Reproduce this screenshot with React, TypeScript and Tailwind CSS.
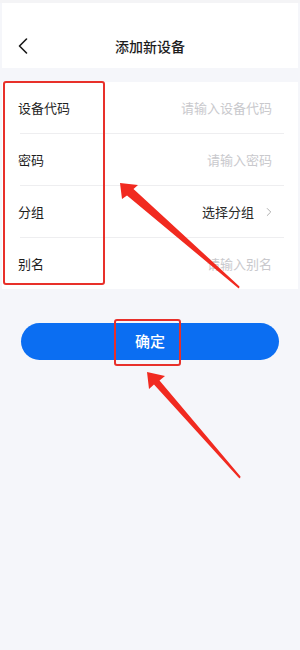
import { ChevronLeft, ChevronRight } from 'lucide-react'

const rows = [
  { label: '设备代码', hint: '请输入设备代码' },
  { label: '密码', hint: '请输入密码' },
  { label: '分组', hint: '选择分组', select: true },
  { label: '别名', hint: '请输入别名' },
]

export default function App() {
  return (
    <div
      className="relative w-[300px] h-[650px] overflow-hidden bg-[#f5f6fa]"
      style={{ fontFamily: '"Noto Sans CJK SC", "Noto Sans", sans-serif' }}
    >
      <div className="h-[3px] bg-[#f4f4f6]" />
      <header className="mx-[2px] bg-white pt-[27px] pb-[6px]">
        <div className="relative h-[32px] flex items-center justify-center">
          <ChevronLeft className="absolute left-[7px] w-[28px] h-[28px] text-[#1a1a1a]" strokeWidth={1.4} />
          <h1 className="text-[14px] font-medium text-[#1c1c1c]">添加新设备</h1>
        </div>
      </header>

      <div className="mt-[14px] mx-[2px] bg-white">
        {rows.map((r, i) => (
          <div key={r.label}>
            <div className="h-[51px] flex items-center justify-between pl-[16px] pr-[26px]">
              <span className="text-[13px] text-[#1f1f1f]">{r.label}</span>
              {r.select ? (
                <span className="flex items-center gap-[8px] text-[13px] text-[#2a2a2a] -mr-[4px]">
                  {r.hint}
                  <ChevronRight className="w-[14px] h-[14px] text-[#aaa]" strokeWidth={1.6} />
                </span>
              ) : (
                <span className="text-[13px] text-[#c9c9cd]">{r.hint}</span>
              )}
            </div>
            {i < rows.length - 1 && <div className="ml-[18px] mr-[14px] h-px bg-[#eeeef0]" />}
          </div>
        ))}
      </div>

      <div className="mt-[34px] px-[21px]">
        <button className="w-full h-[37px] rounded-full bg-[#0b6ef2] text-white text-[15px] font-medium">
          确定
        </button>
      </div>

      {/* annotations */}
      <div className="absolute left-[3px] top-[81px] w-[102px] h-[204px] border-2 border-[#e8302a] rounded-[3px]" />
      <div className="absolute left-[114px] top-[319px] w-[67px] h-[47px] border-2 border-[#e8302a] rounded-[3px]" />
      <svg className="absolute inset-0 pointer-events-none" width="300" height="650" viewBox="0 0 300 650">
        <polygon points="120,183 138,185 133.5,189 239.5,286.5 239,288.5 237.5,287.5 127,195.5 122,199" fill="#f12a20" />
        <polygon points="147,372 165,376 159.5,380.5 240.5,476.5 240,478.5 238.5,477.5 154,384.5 149,389" fill="#f12a20" />
      </svg>
    </div>
  )
}
